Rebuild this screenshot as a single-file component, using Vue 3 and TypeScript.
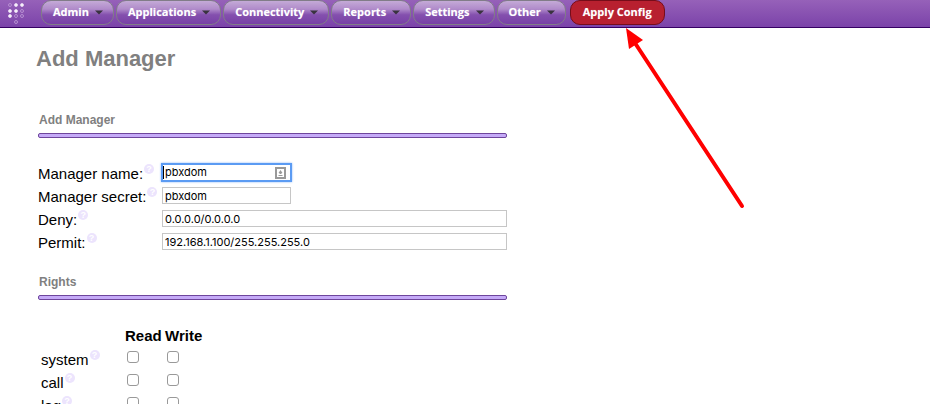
<script setup lang="ts">
import { reactive } from 'vue'

const menus: string[] = ['Admin', 'Applications', 'Connectivity', 'Reports', 'Settings', 'Other']

const form = reactive({
  name: 'pbxdom',
  secret: 'pbxdom',
  deny: '0.0.0.0/0.0.0.0',
  permit: '192.168.1.100/255.255.255.0',
})

interface Right {
  name: string
  read: boolean
  write: boolean
}

const rights = reactive<Right[]>([
  { name: 'system', read: false, write: false },
  { name: 'call', read: false, write: false },
  { name: 'log', read: false, write: false },
])

const dots = [
  { x: 2, y: 2, on: false }, { x: 8, y: 2, on: true }, { x: 14, y: 2, on: true },
  { x: 2, y: 8, on: true }, { x: 8, y: 8, on: true }, { x: 14, y: 8, on: false },
  { x: 2, y: 13, on: true }, { x: 8, y: 13, on: false }, { x: 14, y: 13, on: false },
  { x: 8, y: 19, on: false },
]
</script>

<template>
  <div class="page">
    <header class="bar">
      <svg class="logo" width="16" height="21" viewBox="0 0 16 21" aria-hidden="true">
        <circle v-for="(d, i) in dots" :key="i" :cx="d.x" :cy="d.y" r="1.5" :class="d.on ? 'on' : 'off'" />
      </svg>
      <nav class="menu">
        <button v-for="m in menus" :key="m" type="button" class="item">
          {{ m }}
          <svg class="caret" width="8" height="5" viewBox="0 0 8 5" aria-hidden="true"><path d="M0 .5h8L4 4.5z" /></svg>
        </button>
        <button type="button" class="item apply">Apply Config</button>
      </nav>
    </header>

    <main class="content">
      <h1>Add Manager</h1>
      <form @submit.prevent>
        <section>
          <h2>Add Manager</h2>
          <hr />
          <div class="fields">
            <div class="label"><label for="name">Manager name:</label><span class="help">?</span></div>
            <div class="focus-box">
              <input id="name" v-model="form.name" type="text" class="bare" />
              <svg width="11" height="12" viewBox="0 0 11 12" aria-hidden="true">
                <rect x="1" y="1" width="9" height="10" fill="#fff" stroke="#999" stroke-width="2" />
                <path d="M5.500 3L7.500 6H6.500V7H4.500V6H3.500zM3.500 8h4v1h-4z" fill="#999" />
              </svg>
            </div>
            <div class="label"><label for="secret">Manager secret:</label><span class="help">?</span></div>
            <input id="secret" v-model="form.secret" type="text" class="text short" />
            <div class="label"><label for="deny">Deny:</label><span class="help">?</span></div>
            <input id="deny" v-model="form.deny" type="text" class="text" />
            <div class="label"><label for="permit">Permit:</label><span class="help">?</span></div>
            <input id="permit" v-model="form.permit" type="text" class="text" />
          </div>
        </section>

        <section>
          <h2>Rights</h2>
          <hr />
          <table class="rights">
            <thead>
              <tr><td></td><th scope="col">Read</th><th scope="col">Write</th></tr>
            </thead>
            <tbody>
              <tr v-for="r in rights" :key="r.name">
                <td><div class="right-name">{{ r.name }}<span class="help">?</span></div></td>
                <td><input v-model="r.read" type="checkbox" :aria-label="r.name + ' read'" /></td>
                <td><input v-model="r.write" type="checkbox" :aria-label="r.name + ' write'" /></td>
              </tr>
            </tbody>
          </table>
        </section>
      </form>
    </main>

    <svg class="arrow" width="122" height="184" viewBox="0 0 122 184" aria-hidden="true">
      <path d="M9 15L116 178" stroke="#f00" stroke-width="4" stroke-linecap="round" />
      <path d="M0 0L17 12L3 21z" fill="#f00" />
    </svg>
  </div>
</template>

<style>
body {
  margin: 0;
  background: #fff;
}
</style>

<style scoped>
.page {
  position: relative;
  height: 100vh;
  overflow: hidden;
  font-family: "Liberation Sans", Arial, sans-serif;
  font-size: 15px;
  color: #000;
}
.bar {
  display: flex;
  align-items: flex-start;
  box-sizing: border-box;
  height: 28px;
  border-bottom: 1px solid #360063;
  background: linear-gradient(#9661b9, #7b43a9);
}
.logo {
  flex: none;
  margin: 3px 17px 0 8px;
}
.on { fill: #fff; stroke: #e0cdee; stroke-width: 1; }
.off { fill: none; stroke: #b68fd1; stroke-width: 1; }
.menu {
  display: flex;
  gap: 2px;
}
.item {
  display: flex;
  align-items: center;
  gap: 6px;
  box-sizing: border-box;
  height: 25px;
  margin: 0;
  padding: 0 10px 1px 11px;
  border: 1px solid #817c88;
  border-radius: 10px;
  background: linear-gradient(#c4aad7 0%, #b08bca 35%, #8450ae 60%, #7840a6 100%);
  color: #fff;
  font: bold 11px/16px "Open Sans", "Noto Sans", sans-serif;
  text-shadow: 0 0 1px #fff6;
  white-space: nowrap;
}
.caret { fill: #39333f; }
.item.apply {
  margin-left: 2px;
  padding: 0 12px 1px;
  border-color: #760d19;
  background: #b8202f;
}
.content {
  padding: 0 38px;
}
h1 {
  margin: 18px 0 0 -2px;
  font-size: 22px;
  line-height: 26px;
  color: #808080;
}
form {
  max-width: 469px;
}
section:first-child { padding-top: 41px; }
section + section { padding-top: 22px; }
h2 {
  margin: 0;
  padding-left: 1px;
  font-size: 12px;
  line-height: 14px;
  color: #808080;
}
hr {
  box-sizing: border-box;
  height: 5px;
  margin: 6px 0 0;
  border: 1px solid #6e459c;
  border-radius: 2px;
  background: #c5aaf8;
}
.fields {
  display: grid;
  grid-template-columns: 124px 1fr;
  grid-auto-rows: 23px;
  align-items: center;
  padding-top: 23px;
}
.label,
.right-name {
  display: flex;
  align-items: flex-start;
  line-height: 20px;
  white-space: nowrap;
}
.label { padding-top: 3px; }
.right-name { padding: 2px 0 0 3px; }
.help {
  flex: none;
  width: 10px;
  height: 10px;
  margin-left: 1px;
  border-radius: 50%;
  background: #ece4fd;
  color: #fff;
  font-size: 9px;
  font-weight: bold;
  line-height: 10px;
  text-align: center;
}
.text,
.bare {
  box-sizing: border-box;
  min-width: 0;
  margin: 0;
  background: #fff;
  color: #000;
  font: 11px/13px Inter, sans-serif;
}
.text {
  width: 100%;
  height: 17px;
  padding: 1px 2px;
  border: 1px solid #c6c6c6;
}
.short { width: 129px; }
.focus-box {
  display: flex;
  align-items: center;
  box-sizing: border-box;
  width: 129px;
  height: 17px;
  padding-right: 4px;
  border: 1px solid #5b9bf3;
  box-shadow: 0 0 0 1px #5b9bf3, 0 0 2px 1px #8bb8f7;
}
.bare {
  flex: 1;
  height: 13px;
  padding: 0 1px;
  border: 0;
  border-left: 1px solid #000;
  outline: 0;
}
.rights {
  margin-top: 24px;
  border-collapse: collapse;
  table-layout: fixed;
  width: 167px;
}
.rights td,
.rights th {
  height: 23px;
  padding: 0;
  text-align: left;
  vertical-align: middle;
  line-height: 20px;
}
.rights thead td { width: 87px; }
.rights th { width: 40px; }
.rights input {
  display: block;
  appearance: none;
  box-sizing: border-box;
  width: 12px;
  height: 12px;
  margin: 0 0 4px 2px;
  border: 1px solid #999;
  border-radius: 3px;
  background: #fff;
}
.arrow {
  position: absolute;
  left: 626px;
  top: 28px;
  fill: none;
}
</style>
